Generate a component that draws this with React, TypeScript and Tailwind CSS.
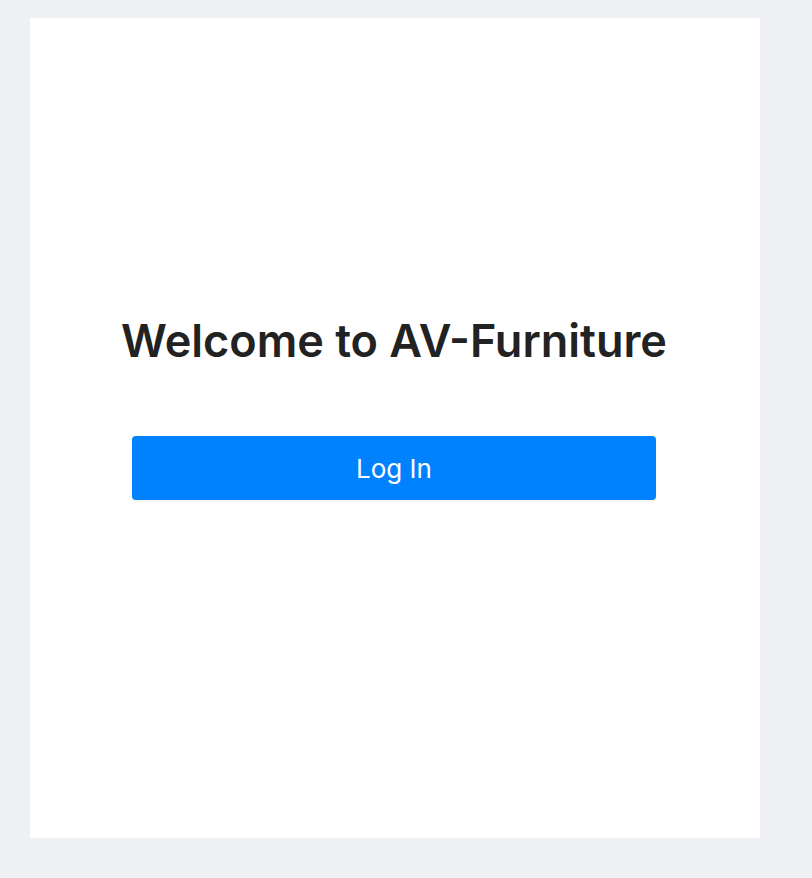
export default function App() {
  return (
    <div
      className="min-h-[878px] w-full bg-[#eef0f4] pt-[18px] pl-[30px]"
      style={{ fontFamily: "Inter, 'Noto Sans', sans-serif" }}
    >
      <div className="flex h-[820px] w-[730px] flex-col items-center bg-white pt-[295px] pr-[2px]">
        <h1 className="text-[45px] font-semibold leading-[56px] text-[#222222]">
          Welcome to AV-Furniture
        </h1>
        <button
          type="button"
          className="mt-[67px] h-[64px] w-[524px] rounded-[4px] bg-[#0082ff] text-[26px] font-normal text-white shadow-[0_2px_3px_rgba(0,0,0,0.06)]"
        >
          Log In
        </button>
      </div>
    </div>
  );
}
